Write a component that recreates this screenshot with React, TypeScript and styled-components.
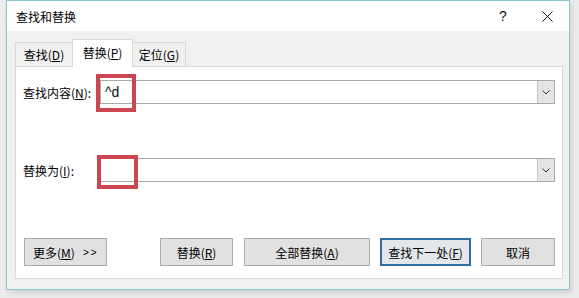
import React from "react";
import styled, { createGlobalStyle } from "styled-components";

const Global = createGlobalStyle`
  html, body { margin: 0; padding: 0; background: #ececec; }
  body { font-family: "Noto Sans CJK SC", "Noto Sans", sans-serif; }
`;

const Page = styled.div`
  width: 579px;
  height: 298px;
  padding-left: 6px;
  box-sizing: border-box;
  background: #ededed;
  overflow: hidden;
`;

const Window = styled.div`
  width: 564px;
  height: 290px;
  box-sizing: border-box;
  border: 1px solid #8cc7cf;
  background: #f0f0f0;
  display: flex;
  flex-direction: column;
  box-shadow: 2px 3px 6px rgba(0, 0, 0, 0.12);
`;

const TitleBar = styled.div`
  height: 30px;
  flex: none;
  background: #ffffff;
  display: flex;
  align-items: center;
  padding-left: 9px;
  padding-right: 0;
  font-size: 12px;
  color: #000;
`;

const TitleText = styled.div`
  flex: 1;
`;

const TitleButton = styled.div`
  width: 44px;
  height: 30px;
  display: flex;
  align-items: center;
  justify-content: center;
  color: #111;
  font-family: "Liberation Sans", sans-serif;
  font-size: 14px;
`;

const Body = styled.div`
  flex: 1;
  display: flex;
  flex-direction: column;
  padding: 9px 6px 10px 8px;
`;

const TabRow = styled.div`
  display: flex;
  align-items: flex-end;
  height: 27px;
  position: relative;
  z-index: 1;
  margin-bottom: -1px;
`;

const Tab = styled.div<{ $active?: boolean; $w: number }>`
  width: ${(p) => p.$w}px;
  height: ${(p) => (p.$active ? 28 : 25)}px;
  box-sizing: border-box;
  border: 1px solid #d9d9d9;
  border-bottom: ${(p) => (p.$active ? "none" : "1px solid #d9d9d9")};
  margin-left: ${(p) => (p.$active ? -1 : 0)}px;
  margin-right: ${(p) => (p.$active ? -1 : 0)}px;
  background: ${(p) => (p.$active ? "#ffffff" : "#f0f0f0")};
  display: flex;
  align-items: center;
  justify-content: center;
  padding-bottom: ${(p) => (p.$active ? 2 : 0)}px;
  font-size: 12px;
  color: #000;
  position: relative;
  z-index: ${(p) => (p.$active ? 2 : 1)};
`;

const Panel = styled.div`
  flex: 1;
  background: #ffffff;
  border: 1px solid #d9d9d9;
  display: flex;
  flex-direction: column;
  padding: 13px 7px 12px 7px;
`;

const FieldRow = styled.div<{ $mt?: number }>`
  display: flex;
  align-items: center;
  margin-top: ${(p) => p.$mt ?? 0}px;
`;

const Label = styled.div`
  width: 77px;
  font-size: 12px;
  color: #000;
`;

const Combo = styled.div`
  flex: 1;
  height: 24px;
  box-sizing: border-box;
  border: 1px solid #a9a9a9;
  display: flex;
  align-items: stretch;
  position: relative;
  background: #fff;
`;

const ComboText = styled.div`
  flex: 1;
  display: flex;
  align-items: center;
  padding-left: 4px;
  font-family: "Liberation Sans", sans-serif;
  font-size: 14px;
  color: #111;
`;

const DropButton = styled.div`
  width: 16px;
  background: #e4e4e4;
  border-left: 1px solid #c4c4c4;
  display: flex;
  align-items: center;
  justify-content: center;
`;

const Highlight = styled.div<{ $l: number; $t: number; $w: number; $h: number }>`
  position: absolute;
  left: ${(p) => p.$l}px;
  top: ${(p) => p.$t}px;
  width: ${(p) => p.$w}px;
  height: ${(p) => p.$h}px;
  box-sizing: border-box;
  border: 4px solid #cc4651;
  pointer-events: none;
`;

const ButtonRow = styled.div`
  margin-top: auto;
  display: flex;
  align-items: center;
`;

const Spacer = styled.div`
  flex: 1;
`;

const Button = styled.div<{ $w: number; $ml?: number; $default?: boolean; $left?: boolean }>`
  width: ${(p) => p.$w}px;
  margin-left: ${(p) => p.$ml ?? 0}px;
  height: 28px;
  box-sizing: border-box;
  border: ${(p) => (p.$default ? "2px solid #2e6fa3" : "1px solid #adadad")};
  background: ${(p) => (p.$default ? "#e3e6ea" : "#e1e1e1")};
  display: flex;
  align-items: center;
  justify-content: ${(p) => (p.$left ? "flex-start" : "center")};
  padding-left: ${(p) => (p.$left ? 8 : 0)}px;
  font-size: 12px;
  color: #000;
`;

const Arrows = styled.span`
  font-family: "Liberation Sans", sans-serif;
  font-size: 10px;
  margin-left: 8px;
  letter-spacing: 2px;
`;

const U = styled.span`
  text-decoration: underline;
  text-underline-offset: 1px;
`;

const Chevron = () => (
  <svg width="8" height="5" viewBox="0 0 8 5">
    <path d="M0.5 0.5 L4 4 L7.5 0.5" fill="none" stroke="#333" strokeWidth="1" />
  </svg>
);

const CloseIcon = () => (
  <svg width="11" height="11" viewBox="0 0 11 11">
    <path d="M0.5 0.5 L10.5 10.5 M10.5 0.5 L0.5 10.5" stroke="#111" strokeWidth="1" />
  </svg>
);

export default function App() {
  return (
    <>
      <Global />
      <Page>
        <Window>
          <TitleBar>
            <TitleText>查找和替换</TitleText>
            <TitleButton>?</TitleButton>
            <TitleButton>
              <CloseIcon />
            </TitleButton>
          </TitleBar>
          <Body>
            <TabRow>
              <Tab $w={58}>
                查找(<U>D</U>)
              </Tab>
              <Tab $w={61} $active>
                替换(<U>P</U>)
              </Tab>
              <Tab $w={54}>
                定位(<U>G</U>)
              </Tab>
            </TabRow>
            <Panel>
              <FieldRow>
                <Label>
                  查找内容(<U>N</U>):
                </Label>
                <Combo>
                  <ComboText>^d</ComboText>
                  <DropButton>
                    <Chevron />
                  </DropButton>
                  <Highlight $l={-5} $t={-7} $w={40} $h={38} />
                </Combo>
              </FieldRow>
              <FieldRow $mt={54}>
                <Label>
                  替换为(<U>I</U>):
                </Label>
                <Combo>
                  <ComboText />
                  <DropButton>
                    <Chevron />
                  </DropButton>
                  <Highlight $l={-4} $t={-4} $w={41} $h={34} />
                </Combo>
              </FieldRow>
              <ButtonRow>
                <Button $w={83} $ml={1} $left>
                  更多(<U>M</U>)<Arrows>&gt;&gt;</Arrows>
                </Button>
                <Spacer />
                <Button $w={73}>
                  替换(<U>R</U>)
                </Button>
                <Button $w={126} $ml={11}>
                  全部替换(<U>A</U>)
                </Button>
                <Button $w={91} $ml={10} $default>
                  查找下一处(<U>F</U>)
                </Button>
                <Button $w={74} $ml={10}>
                  取消
                </Button>
              </ButtonRow>
            </Panel>
          </Body>
        </Window>
      </Page>
    </>
  );
}
